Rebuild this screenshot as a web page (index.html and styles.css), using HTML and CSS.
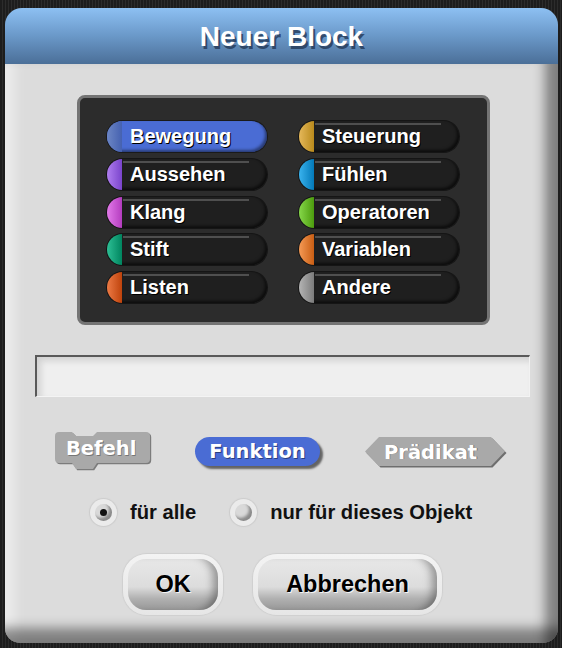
FILE: index.html
```html
<!DOCTYPE html>
<html lang="de">
<head>
<meta charset="utf-8">
<title>Neuer Block</title>
<link rel="stylesheet" href="styles.css">
</head>
<body>
<div class="dialog">
  <div class="title">Neuer Block</div>
  <div class="body">
    <div class="palette">
      <div class="cat c-motion selected"><span class="cap"></span><span class="label">Bewegung</span></div>
      <div class="cat c-control"><span class="cap"></span><span class="label">Steuerung</span></div>
      <div class="cat c-looks"><span class="cap"></span><span class="label">Aussehen</span></div>
      <div class="cat c-sensing"><span class="cap"></span><span class="label">Fühlen</span></div>
      <div class="cat c-sound"><span class="cap"></span><span class="label">Klang</span></div>
      <div class="cat c-operators"><span class="cap"></span><span class="label">Operatoren</span></div>
      <div class="cat c-pen"><span class="cap"></span><span class="label">Stift</span></div>
      <div class="cat c-variables"><span class="cap"></span><span class="label">Variablen</span></div>
      <div class="cat c-lists"><span class="cap"></span><span class="label">Listen</span></div>
      <div class="cat c-other"><span class="cap"></span><span class="label">Andere</span></div>
    </div>

    <div class="name-input"></div>

    <div class="shapes">
      <svg class="shape-command" width="97" height="40" viewBox="0 0 97 40">
        <path transform="translate(1.2,1.2)" fill="#7c7c7c" d="M4 0 H17 L21 4 H38 L42 0 H91 Q95 0 95 4 V27 Q95 31 91 31 H42 L38 37 H21 L17 31 H4 Q0 31 0 27 V4 Q0 0 4 0 Z"/>
        <path fill="#a9a9a9" d="M4 0 H17 L21 4 H38 L42 0 H91 Q95 0 95 4 V27 Q95 31 91 31 H42 L38 37 H21 L17 31 H4 Q0 31 0 27 V4 Q0 0 4 0 Z"/>
        <text class="shape-text-shadow" x="11.8" y="23.8">Befehl</text>
        <text class="shape-text" x="11" y="23">Befehl</text>
      </svg>
      <div class="shape-reporter">Funktion</div>
      <svg class="shape-predicate" width="143" height="32" viewBox="0 0 143 32">
        <polygon transform="translate(1.5,1.5)" fill="#6e6e6e" points="0,14.5 14,0 126,0 140,14.5 126,29 14,29"/>
        <polygon fill="#a9a9a9" points="0,14.5 14,0 126,0 140,14.5 126,29 14,29"/>
        <text class="shape-text-shadow" x="19.8" y="22.3">Prädikat</text>
        <text class="shape-text" x="19" y="21.5">Prädikat</text>
      </svg>
    </div>

    <div class="scope">
      <div class="option">
        <span class="radio"><span class="radio-in"><span class="dot"></span></span></span>
        <span class="option-text">für alle</span>
      </div>
      <div class="option">
        <span class="radio"><span class="radio-in"></span></span>
        <span class="option-text">nur für dieses Objekt</span>
      </div>
    </div>

    <div class="actions">
      <div class="btn-ring btn-ok"><div class="btn">OK</div></div>
      <div class="btn-ring btn-cancel"><div class="btn">Abbrechen</div></div>
    </div>
  </div>
</div>
</body>
</html>
```

FILE: styles.css
```css
html, body {
  margin: 0;
  padding: 0;
}

body {
  width: 562px;
  height: 648px;
  overflow: hidden;
  background: repeating-linear-gradient(90deg, #1d1d1d 0 2px, #2c2c2c 2px 3px);
  font-family: "Liberation Sans", Arial, sans-serif;
  font-weight: bold;
}

.dialog {
  margin: 8px 0 0 5px;
  width: 553px;
  height: 635px;
  border-radius: 17px 17px 15px 15px;
  overflow: hidden;
  display: flex;
  flex-direction: column;
}

.title {
  height: 56px;
  flex: none;
  background: linear-gradient(#8dc0f2, #6a98c8 50%, #4b6f98);
  color: #fff;
  font-size: 28px;
  line-height: 58px;
  text-align: center;
  text-shadow: 2px 3px 0 rgba(35, 55, 85, 0.8);
}

.body {
  flex: 1;
  background: #dcdcdc;
  box-shadow:
    inset -21px 0 12px -8px rgba(0, 0, 0, 0.42),
    inset 0 -25px 12px -10px rgba(0, 0, 0, 0.42),
    inset 16px 0 14px -8px rgba(255, 255, 255, 0.55);
  padding-top: 31px;
  display: flex;
  flex-direction: column;
}

/* category palette */
.palette {
  margin-left: 72px;
  width: 413px;
  height: 230px;
  box-sizing: border-box;
  border: 3px solid #747474;
  border-radius: 8px;
  background: #2c2c2c;
  padding: 23px 0 0 27px;
  display: grid;
  grid-template-columns: 160px 160px;
  grid-auto-rows: 31px;
  column-gap: 32px;
  row-gap: 6.75px;
}

.cat {
  display: flex;
  align-items: center;
  border-radius: 16px;
  overflow: hidden;
  background-color: #1f1f1f;
  background-image: linear-gradient(#4f4f4f, #4f4f4f);
  background-repeat: no-repeat;
  background-position: 16px 2px;
  background-size: calc(100% - 34px) 2px;
  box-shadow: 0 0 0 1px #151515, inset -2px -2px 3px rgba(0, 0, 0, 0.6);
  color: #fff;
  font-size: 20px;
  text-shadow: 1px 1px 0 #000;
}

.cat.selected {
  background-color: #4a6cd4;
  background-image: none;
  box-shadow: 0 0 0 1px #1a1a1a, inset -2px -2px 3px rgba(0, 0, 0, 0.45);
}

.cap {
  width: 15px;
  height: 100%;
  flex: none;
  background: linear-gradient(90deg, var(--c1), var(--c2));
}

.label {
  margin-left: 8px;
  white-space: nowrap;
}

.c-motion    { --c1: #6c86c4; --c2: #4561b0; }
.c-looks     { --c1: #b07ef0; --c2: #7a44cc; }
.c-sound     { --c1: #e27ae9; --c2: #b43cbf; }
.c-pen       { --c1: #2dbf95; --c2: #00855f; }
.c-lists     { --c1: #ec7a45; --c2: #bf430c; }
.c-control   { --c1: #e5b85a; --c2: #b98a1c; }
.c-sensing   { --c1: #3ab3ee; --c2: #0379b8; }
.c-operators { --c1: #86d84a; --c2: #4c9b0d; }
.c-variables { --c1: #f59a55; --c2: #c95e14; }
.c-other     { --c1: #b4b4b4; --c2: #7c7c7c; }

/* name input */
.name-input {
  margin: 30px 0 0 30px;
  width: 495px;
  height: 42px;
  box-sizing: border-box;
  background: #efefef;
  border-top: 2px solid #595959;
  border-left: 2px solid #595959;
  border-right: 1px solid #f2f2f2;
  border-bottom: 1px solid #f4f4f4;
  box-shadow: inset 4px 4px 6px rgba(0, 0, 0, 0.12);
}

/* block shapes */
.shapes {
  margin: 35px 0 0 50px;
  height: 40px;
  display: flex;
  align-items: flex-start;
}

.shape-command {
  flex: none;
}

.shape-text,
.shape-text-shadow {
  font-family: "DejaVu Sans", Verdana, sans-serif;
  font-weight: bold;
  font-size: 19.5px;
}

.shape-text { fill: #ffffff; }
.shape-text-shadow { fill: #767676; }

.shape-reporter {
  margin: 5px 0 0 43px;
  width: 125px;
  height: 29px;
  box-sizing: border-box;
  border-radius: 15px;
  background: #4a6cd4;
  box-shadow: 3px 3px 2px rgba(0, 0, 0, 0.55);
  color: #fff;
  font-family: "DejaVu Sans", Verdana, sans-serif;
  font-size: 19.5px;
  line-height: 30px;
  text-align: center;
  text-shadow: 1px 1px 0 #2a3f80;
}

.shape-predicate {
  margin: 5px 0 0 45px;
  flex: none;
}

/* scope radios */
.scope {
  margin: 26px 0 0 85px;
  height: 28px;
  display: flex;
  align-items: center;
  gap: 34px;
}

.option {
  display: flex;
  align-items: center;
  gap: 13px;
  font-size: 20.2px;
  color: #111;
}

.radio {
  width: 27px;
  height: 27px;
  border-radius: 50%;
  background: #ebebeb;
  box-shadow: 0 0 1px 1px #cccccc;
  display: flex;
  align-items: center;
  justify-content: center;
}

.radio-in {
  width: 17px;
  height: 17px;
  border-radius: 50%;
  background: #d9d9d9;
  box-shadow: inset -3px -3px 3px #8a8a8a;
  display: flex;
  align-items: center;
  justify-content: center;
}

.dot {
  width: 7px;
  height: 7px;
  border-radius: 50%;
  background: #111;
}

/* action buttons */
.actions {
  margin: 28px 0 0 118px;
  display: flex;
  gap: 30px;
}

.btn-ring {
  height: 61px;
  box-sizing: border-box;
  padding: 5px;
  border-radius: 24px;
  background: linear-gradient(#f3f3f3, #e6e6e6);
  box-shadow: 0 0 1px 1px #cfcfcf;
}

.btn-ok { width: 100px; }
.btn-cancel { width: 189px; }

.btn {
  height: 100%;
  border-radius: 18px;
  background: linear-gradient(#e8e8e8 0%, #dcdcdc 55%, #b0b0b0 78%, #989898 100%);
  box-shadow: inset -10px 0 8px -5px rgba(0, 0, 0, 0.35);
  display: flex;
  align-items: center;
  justify-content: center;
  font-size: 23.5px;
  color: #000;
  text-shadow: 1px 1px 0 #f4f4f4;
}
```
